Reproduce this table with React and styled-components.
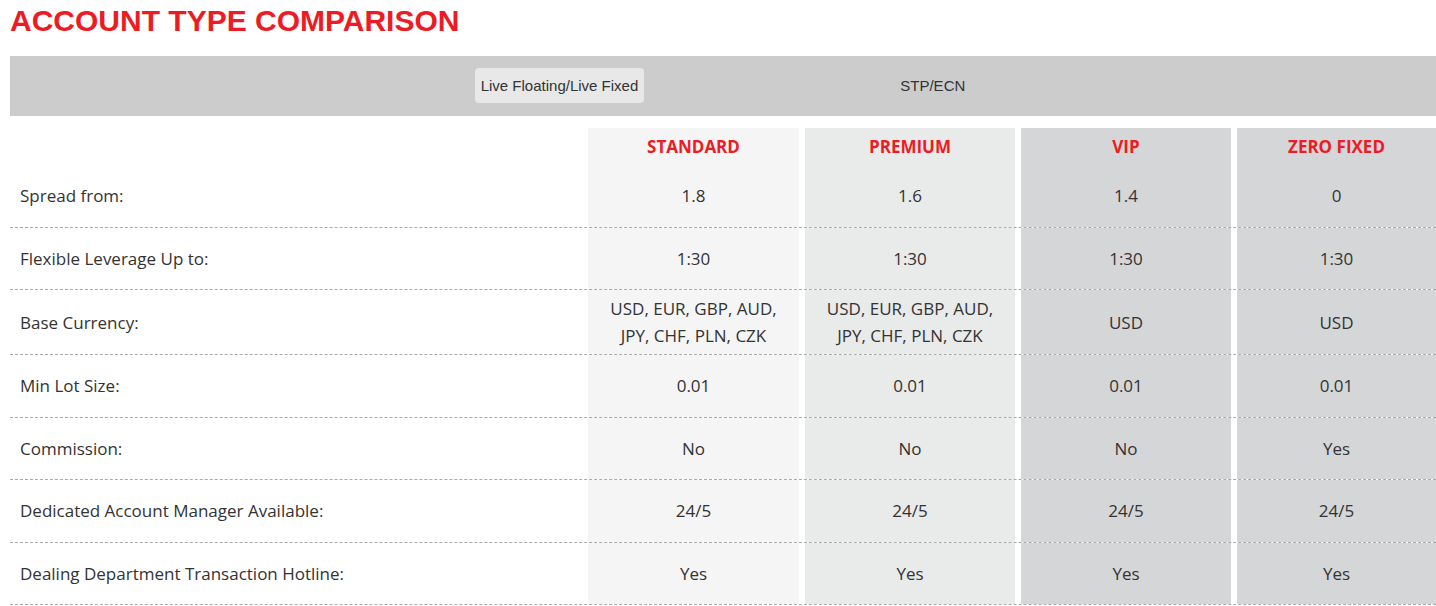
import React from 'react';
import styled, { createGlobalStyle } from 'styled-components';

const GlobalStyle = createGlobalStyle`
    html, body {
        margin: 0;
        padding: 0;
        background: #fff;
        overflow: hidden;
    }
`;

const Page = styled.div`
    padding: 0 0 0 10px;
    width: 1426px;
`;

const Title = styled.h1`
    margin: 0;
    padding-top: 4px;
    height: 56px;
    box-sizing: border-box;
    font-family: 'Liberation Sans', Arial, sans-serif;
    font-weight: 700;
    font-size: 30px;
    line-height: 34px;
    color: #ed1c24;
`;

const TabBar = styled.div`
    height: 60px;
    background: #cccccc;
    display: flex;
    justify-content: center;
    align-items: center;
    gap: 250px;
`;

const Tab = styled.button`
    border: none;
    margin: 0 0 2px;
    height: 35px;
    padding: 0 6px;
    border-radius: 4px;
    font-family: 'Liberation Sans', Arial, sans-serif;
    font-size: 15px;
    line-height: 33px;
    color: #333;
    cursor: pointer;
    background: ${(p) => (p.$active ? '#e8e8e8' : 'transparent')};
`;

const Table = styled.div`
    margin-top: 12px;
    font-family: 'Open Sans', 'Segoe UI', sans-serif;
    color: #333;
`;

const Row = styled.div`
    display: grid;
    grid-template-columns: 572px 211px 210px 210px 199px;
    column-gap: 6px;
    border-bottom: ${(p) => (p.$head ? 'none' : '1px dashed #aaaaaa')};
`;

const shades = ['#ffffff', '#f5f5f5', '#e9eaea', '#d5d6d8', '#d5d6d8'];

const Cell = styled.div`
    background: ${(p) => shades[p.$col]};
    display: flex;
    align-items: center;
    justify-content: ${(p) => (p.$col === 0 ? 'flex-start' : 'center')};
    text-align: ${(p) => (p.$col === 0 ? 'left' : 'center')};
    padding: ${(p) => (p.$col === 0 ? '5px 10px' : '5px 8px')};
    min-height: 51.5px;
    font-size: 17px;
    line-height: 27px;
`;

const HeadCell = styled(Cell)`
    min-height: 0;
    height: 37px;
    box-sizing: border-box;
    padding-top: 5px;
    align-items: flex-start;
    color: #ed1c24;
    font-weight: 700;
    font-size: 17px;
    line-height: 28px;
`;

const plans = ['STANDARD', 'PREMIUM', 'VIP', 'ZERO FIXED'];

const rows = [
    ['Spread from:', '1.8', '1.6', '1.4', '0'],
    ['Flexible Leverage Up to:', '1:30', '1:30', '1:30', '1:30'],
    [
        'Base Currency:',
        'USD, EUR, GBP, AUD, JPY, CHF, PLN, CZK',
        'USD, EUR, GBP, AUD, JPY, CHF, PLN, CZK',
        'USD',
        'USD',
    ],
    ['Min Lot Size:', '0.01', '0.01', '0.01', '0.01'],
    ['Commission:', 'No', 'No', 'No', 'Yes'],
    ['Dedicated Account Manager Available:', '24/5', '24/5', '24/5', '24/5'],
    ['Dealing Department Transaction Hotline:', 'Yes', 'Yes', 'Yes', 'Yes'],
];

export default function App() {
    return (
        <>
            <GlobalStyle />
            <Page>
                <Title>ACCOUNT TYPE COMPARISON</Title>
                <TabBar>
                    <Tab $active>Live Floating/Live Fixed</Tab>
                    <Tab>STP/ECN</Tab>
                </TabBar>
                <Table>
                    <Row $head>
                        <HeadCell $col={0} />
                        {plans.map((p, i) => (
                            <HeadCell key={p} $col={i + 1}>{p}</HeadCell>
                        ))}
                    </Row>
                    {rows.map((r) => (
                        <Row key={r[0]}>
                            {r.map((v, i) => (
                                <Cell key={i} $col={i}>{v}</Cell>
                            ))}
                        </Row>
                    ))}
                </Table>
            </Page>
        </>
    );
}
